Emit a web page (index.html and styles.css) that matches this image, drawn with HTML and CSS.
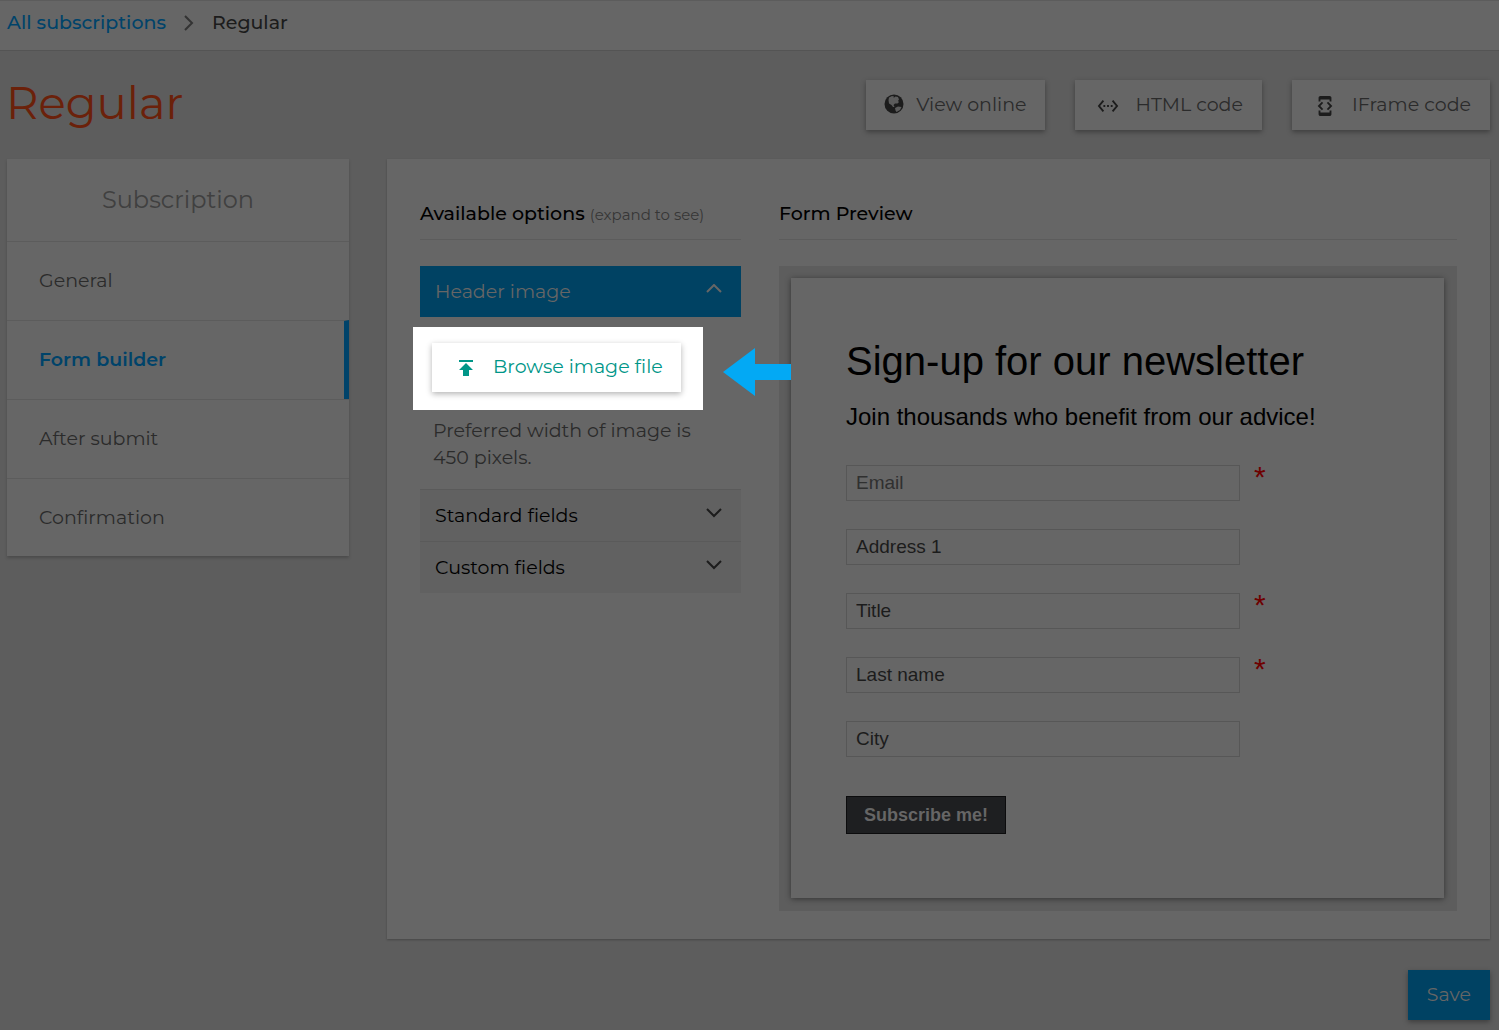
FILE: index.html
```html
<!DOCTYPE html>
<html lang="en">
<head>
<meta charset="utf-8">
<title>Regular - Form builder</title>
<link rel="stylesheet" href="styles.css">
</head>
<body>
<nav class="crumbs" aria-label="Breadcrumb">
  <a href="#">All subscriptions</a>
  <svg class="crumb-arrow" viewBox="0 0 10 16" aria-hidden="true"><path d="M1 1l7 7-7 7"/></svg>
  <span>Regular</span>
</nav>
<header class="head">
  <h1>Regular</h1>
  <div class="actions">
    <button class="btn view" type="button">
      <svg viewBox="0 0 20 20" aria-hidden="true"><circle cx="10" cy="10" r="9.500"/><path class="land" d="M5 3.500L8 2l2 .5L9.500 4l2-1.500L14 3l1 2.500-1 1.500 1 1-1.500 1.500L11 9.500 9.500 11l1 2-1.500 0L7.500 11 5 9.500 4.500 6zM11 14l3-1.500 3.500.5-1.500 3-3.500 2-1-1.500z"/></svg>
      View online
    </button>
    <button class="btn" type="button">
      <svg viewBox="0 0 24 24" aria-hidden="true"><path d="M7.770 6.760L6.230 5.480.82 12l5.410 6.520 1.540-1.280L3.420 12l4.350-5.240zM7 13h2v-2H7v2zm10-2h-2v2h2v-2zm-6 2h2v-2h-2v2zm6.770-7.520l-1.540 1.280L20.580 12l-4.350 5.240 1.540 1.280L23.180 12l-5.410-6.520z"/></svg>
      HTML code
    </button>
    <button class="btn" type="button">
      <svg viewBox="0 0 24 24" aria-hidden="true"><path d="M7 5h10v2h2V3c0-1.100-.9-1.990-2-1.990L7 1c-1.100 0-2 .9-2 2v4h2V5zm8.410 11.590L20 12l-4.590-4.590L14 8.830 17.170 12 14 15.170l1.410 1.420zM10 15.170L6.830 12 10 8.830 8.590 7.410 4 12l4.590 4.590L10 15.170zM17 19H7v-2H5v4c0 1.100.9 2 2 2h10c1.100 0 2-.9 2-2v-4h-2v2z"/></svg>
      IFrame code
    </button>
  </div>
</header>
<div class="layout">
  <nav class="side" aria-label="Subscription">
    <h2>Subscription</h2>
    <a href="#">General</a>
    <a class="active" href="#" aria-current="page">Form builder</a>
    <a href="#">After submit</a>
    <a href="#">Confirmation</a>
  </nav>
  <main class="main">
    <section class="options">
      <h3>Available options <small>(expand to see)</small></h3>
      <button class="fold open" type="button" aria-expanded="true">Header image
        <svg viewBox="0 0 16 10" aria-hidden="true"><path d="M1 8l7-7 7 7"/></svg>
      </button>
      <div class="spot">
        <button class="browse" type="button">
          <svg viewBox="0 0 24 24" aria-hidden="true"><path d="M5 4v2h14V4H5zm0 10h4v6h6v-6h4l-7-7-7 7z"/></svg>
          Browse image file
        </button>
        <svg class="pointer" viewBox="0 0 68 48" aria-hidden="true"><path d="M0 24L32 0v16h36v16H32v16z"/></svg>
      </div>
      <p class="hint">Preferred width of image is 450 pixels.</p>
      <button class="fold" type="button" aria-expanded="false">Standard fields
        <svg viewBox="0 0 16 10" aria-hidden="true"><path d="M1 1l7 7 7-7"/></svg>
      </button>
      <button class="fold" type="button" aria-expanded="false">Custom fields
        <svg viewBox="0 0 16 10" aria-hidden="true"><path d="M1 1l7 7 7-7"/></svg>
      </button>
    </section>
    <section class="preview">
      <h3>Form Preview</h3>
      <div class="frame">
        <form class="paper">
          <h4>Sign-up for our newsletter</h4>
          <p>Join thousands who benefit from our advice!</p>
          <div class="row"><input class="email" type="text" placeholder="Email" aria-label="Email"><span>*</span></div>
          <div class="row"><input type="text" placeholder="Address 1" aria-label="Address 1"></div>
          <div class="row"><input type="text" placeholder="Title" aria-label="Title"><span>*</span></div>
          <div class="row"><input type="text" placeholder="Last name" aria-label="Last name"><span>*</span></div>
          <div class="row"><input type="text" placeholder="City" aria-label="City"></div>
          <button class="subscribe" type="button">Subscribe me!</button>
        </form>
      </div>
    </section>
  </main>
</div>
<footer class="foot"><button class="save" type="button">Save</button></footer>
</body>
</html>
```
FILE: styles.css
```css
* { box-sizing: border-box; }
body {
  margin: 0;
  background: #5d5d5d;
  color: #1c1c1c;
  font-family: Montserrat, Gotham, Inter, "Liberation Sans", sans-serif;
  font-size: 19px;
}
h1, h2, h3, h4, p { margin: 0; font-weight: 400; }
a { text-decoration: none; color: inherit; }
button { font: inherit; border: 0; cursor: pointer; }
svg { flex: none; }

.crumbs {
  display: flex;
  align-items: center;
  height: 51px;
  padding: 0 7px 6px;
  background: #666;
  border-top: 1px solid #5c5c5c;
  border-bottom: 1px solid #545454;
  font-weight: 500;
}
.crumbs a { color: #00436a; }
.crumb-arrow {
  width: 10px;
  height: 16px;
  margin: 0 18px;
  fill: none;
  stroke: #333;
  stroke-width: 2;
}

.head {
  display: flex;
  justify-content: space-between;
  align-items: flex-start;
  height: 108px;
  padding: 29px 9px 0 6px;
}
h1 { color: #6b210a; font-size: 45px; line-height: 46px; }
.actions { display: flex; gap: 30px; }
.btn {
  display: flex;
  align-items: center;
  gap: 16px;
  height: 50px;
  padding: 0 19px 2px 22px;
  background: #666;
  color: #2b2b2b;
  box-shadow: 0 2px 5px rgba(0, 0, 0, .35);
}
.btn svg { width: 22px; height: 22px; margin-top: 4px; fill: #1c1c1c; }
.view { gap: 12px; padding-left: 18px; }
.view svg { width: 20px; height: 20px; margin-top: 0; }
.view .land { fill: #5c5c5c; }

.layout {
  display: flex;
  align-items: flex-start;
  gap: 38px;
  padding: 0 9px 0 7px;
}
.side {
  flex: 0 0 342px;
  background: #666;
  box-shadow: 0 2px 3px rgba(0, 0, 0, .2);
}
.side h2 {
  color: #404040;
  font-size: 24px;
  line-height: 82px;
  text-align: center;
}
.side a {
  display: block;
  height: 79px;
  padding-left: 32px;
  border-top: 1px solid #5c5c5c;
  color: #2b2b2b;
  line-height: 77px;
}
.side a:last-child { height: 78px; }
.side .active {
  border-right: 5px solid #00436a;
  color: #00436a;
  font-weight: 600;
}

.main {
  flex: 1;
  min-width: 0;
  display: flex;
  gap: 38px;
  padding: 33px 33px 28px;
  background: #666;
  box-shadow: 0 1px 2px rgba(0, 0, 0, .25);
}
.options { flex: 0 0 321px; }
.preview { flex: 1; min-width: 0; }
h3 {
  height: 48px;
  margin-bottom: 26px;
  border-bottom: 1px solid #5c5c5c;
  color: #000;
  font-size: 19px;
  font-weight: 500;
  line-height: 43px;
}
h3 small { color: #363636; font-size: 15px; font-weight: 400; }
.fold {
  display: flex;
  justify-content: space-between;
  align-items: center;
  width: 100%;
  height: 52px;
  padding: 0 19px 0 15px;
  border-top: 1px solid #5a5a5a;
  background: #616161;
  color: #000;
}
.fold svg {
  width: 16px;
  height: 10px;
  margin-bottom: 6px;
  fill: none;
  stroke: #1c1c1c;
  stroke-width: 2;
}
.fold.open { height: 51px; border: 0; background: #004263; color: #666; }
.fold.open svg { stroke: #666; }
.spot {
  position: relative;
  width: 290px;
  margin: 10px 0 7px -7px;
  padding: 16px 19px 18px;
  background: #fff;
}
.browse {
  display: flex;
  align-items: center;
  gap: 15px;
  height: 49px;
  width: 249px;
  padding: 0 0 2px 22px;
  background: #fff;
  color: #009688;
  white-space: nowrap;
  box-shadow: 0 2px 6px rgba(0, 0, 0, .3);
}
.browse svg { width: 24px; height: 24px; margin-top: 3px; fill: #009688; }
.pointer {
  position: absolute;
  left: 310px;
  top: 21px;
  width: 68px;
  height: 48px;
  fill: #03a9f4;
}
.hint {
  margin-bottom: 18px;
  padding: 0 13px;
  color: #2b2b2b;
  line-height: 27px;
}

.frame { padding: 12px 13px 13px 12px; background: #5d5d5d; }
.paper {
  padding: 55px 55px 64px;
  background: #666;
  color: #000;
  font-family: "Liberation Sans", Arial, sans-serif;
  box-shadow: 0 1px 6px rgba(0, 0, 0, .45);
}
.paper h4 { font-size: 40px; line-height: 56px; }
.paper p { margin-bottom: 21px; font-size: 24px; line-height: 55px; }
.row { display: flex; gap: 14px; margin-bottom: 28px; }
.row input {
  width: 394px;
  height: 36px;
  padding: 0 9px;
  border: 1px solid #575757;
  background: #666;
  font: inherit;
}
.row input::placeholder { color: #1c1c1c; opacity: 1; }
.row .email::placeholder { color: #303030; }
.row span { height: 24px; color: #6e0000; font-size: 30px; line-height: 24px; }
.subscribe {
  width: 160px;
  height: 38px;
  margin-top: 11px;
  border: 1px solid #0c0c0d;
  background: #1e1f21;
  color: #666;
  font-size: 18px;
  font-weight: 700;
}
.foot { display: flex; justify-content: flex-end; padding: 31px 9px 10px; }
.save {
  height: 50px;
  padding: 0 19px 2px;
  background: #004263;
  color: #666;
  box-shadow: 0 2px 5px rgba(0, 0, 0, .35);
}
```
